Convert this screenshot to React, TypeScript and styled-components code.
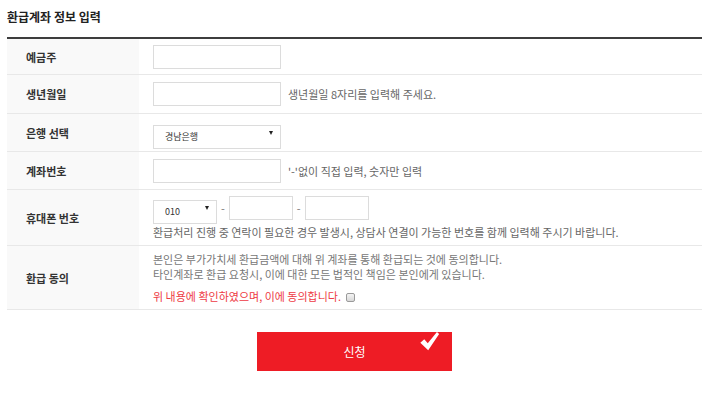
import React from "react";
import styled, { createGlobalStyle } from "styled-components";

const GlobalStyle = createGlobalStyle`
  html, body {
    margin: 0;
    padding: 0;
    background: #fff;
  }
  body {
    font-family: "Noto Sans CJK KR", "Noto Sans", sans-serif;
    color: #333;
  }
`;

const Page = styled.div`
  width: 695px;
  padding-left: 7px;
`;

const Title = styled.h3`
  margin: 0;
  padding: 8px 0 11px;
  font-size: 12px;
  line-height: 18px;
  font-weight: 700;
  color: #222;
`;

const Table = styled.div`
  border-top: 2px solid #3d3d3d;
`;

const Row = styled.div`
  display: grid;
  grid-template-columns: 132px 1fr;
  border-bottom: 1px solid #e8e8e8;
`;

const Label = styled.div`
  display: flex;
  align-items: center;
  padding-left: 19px;
  background: #f9f9f9;
  font-size: 11px;
  font-weight: 700;
  color: #333;
`;

const Cell = styled.div<{ $pad?: string; $gap?: number }>`
  display: flex;
  flex-direction: column;
  justify-content: center;
  gap: ${(p) => p.$gap ?? 5}px;
  padding: ${(p) => p.$pad ?? "7px 0 7px 14px"};
`;

const Line = styled.div<{ $gap?: number }>`
  display: flex;
  align-items: center;
  gap: ${(p) => p.$gap ?? 7}px;
`;

const TextBox = styled.input<{ $w?: number }>`
  box-sizing: border-box;
  width: ${(p) => p.$w ?? 128}px;
  height: 24px;
  margin: 0;
  padding: 0 6px;
  border: 1px solid #dcdcdc;
  background: #fff;
  font-family: inherit;
  font-size: 11px;
  outline: none;
`;

const SelectWrap = styled.div<{ $w: number }>`
  position: relative;
  width: ${(p) => p.$w}px;
  height: 24px;

  &::after {
    content: "";
    position: absolute;
    right: 8px;
    top: 10px;
    border-left: 2.5px solid transparent;
    border-right: 2.5px solid transparent;
    border-top: 4px solid #222;
    pointer-events: none;
  }
`;

const Select = styled.select`
  appearance: none;
  -webkit-appearance: none;
  box-sizing: border-box;
  width: 100%;
  height: 24px;
  margin: 0;
  padding: 0 0 0 11px;
  border: 1px solid #dcdcdc;
  border-radius: 0;
  background: #fff;
  font-family: inherit;
  font-size: 9px;
  color: #333;
  outline: none;
`;

const Hint = styled.span`
  font-size: 11px;
  line-height: 14px;
  color: #666;
`;

const Dash = styled.span`
  font-size: 11px;
  color: #777;
`;

const Notice = styled.p`
  margin: 0;
  font-size: 11px;
  line-height: 15px;
  color: #777;
`;

const Agree = styled.label`
  display: flex;
  align-items: center;
  gap: 5px;
  margin-top: 7px;
  font-size: 11px;
  line-height: 15px;
  color: #ee3a43;
`;

const Check = styled.input`
  appearance: none;
  -webkit-appearance: none;
  box-sizing: border-box;
  width: 9px;
  height: 9px;
  margin: 1px 0 0;
  border: 1px solid #9a9a9a;
  border-radius: 2px;
  background: linear-gradient(#f4f4f4, #d8d8d8);
`;

const Actions = styled.div`
  display: flex;
  justify-content: center;
  padding-top: 22px;
`;

const Submit = styled.button`
  position: relative;
  width: 195px;
  height: 39px;
  border: 0;
  background: #ee1c25;
  color: #fff;
  font-family: inherit;
  font-size: 12px;
  cursor: pointer;
`;

const CheckMark = styled.svg`
  position: absolute;
  right: 12px;
  top: -1px;
  width: 21px;
  height: 21px;
`;

export default function App() {
  return (
    <Page>
      <GlobalStyle />
      <Title>환급계좌 정보 입력</Title>
      <Table>
        <Row>
          <Label>예금주</Label>
          <Cell $pad="6px 0 5px 14px">
            <TextBox />
          </Cell>
        </Row>
        <Row>
          <Label>생년월일</Label>
          <Cell>
            <Line>
              <TextBox />
              <Hint>생년월일 8자리를 입력해 주세요.</Hint>
            </Line>
          </Cell>
        </Row>
        <Row>
          <Label>은행 선택</Label>
          <Cell $pad="7px 0 6px 14px">
            <SelectWrap $w={128}>
              <Select defaultValue="경남은행">
                <option>경남은행</option>
              </Select>
            </SelectWrap>
          </Cell>
        </Row>
        <Row>
          <Label>계좌번호</Label>
          <Cell $pad="7px 0 6px 14px">
            <Line>
              <TextBox />
              <Hint>'-'없이 직접 입력, 숫자만 입력</Hint>
            </Line>
          </Cell>
        </Row>
        <Row>
          <Label>휴대폰 번호</Label>
          <Cell $pad="6px 0 6px 14px" $gap={5}>
            <Line $gap={4}>
              <SelectWrap $w={64}>
                <Select defaultValue="010">
                  <option>010</option>
                </Select>
              </SelectWrap>
              <Dash>-</Dash>
              <TextBox $w={64} />
              <Dash>-</Dash>
              <TextBox $w={64} />
            </Line>
            <Hint>
              환급처리 진행 중 연락이 필요한 경우 발생시, 상담사 연결이 가능한 번호를 함께 입력해 주시기 바랍니다.
            </Hint>
          </Cell>
        </Row>
        <Row>
          <Label>환급 동의</Label>
          <Cell $pad="6px 0 5px 14px" $gap={0}>
            <Notice>본인은 부가가치세 환급금액에 대해 위 계좌를 통해 환급되는 것에 동의합니다.</Notice>
            <Notice>타인계좌로 환급 요청시, 이에 대한 모든 법적인 책임은 본인에게 있습니다.</Notice>
            <Agree>
              위 내용에 확인하였으며, 이에 동의합니다.
              <Check type="checkbox" />
            </Agree>
          </Cell>
        </Row>
      </Table>
      <Actions>
        <Submit type="button">
          신청
          <CheckMark viewBox="0 0 24 24">
            <path
              d="M1.5 13.5 L6 9.5 L10 14 L20.5 1 L23 3.5 L10.5 22 Z"
              fill="#fff"
            />
          </CheckMark>
        </Submit>
      </Actions>
    </Page>
  );
}
